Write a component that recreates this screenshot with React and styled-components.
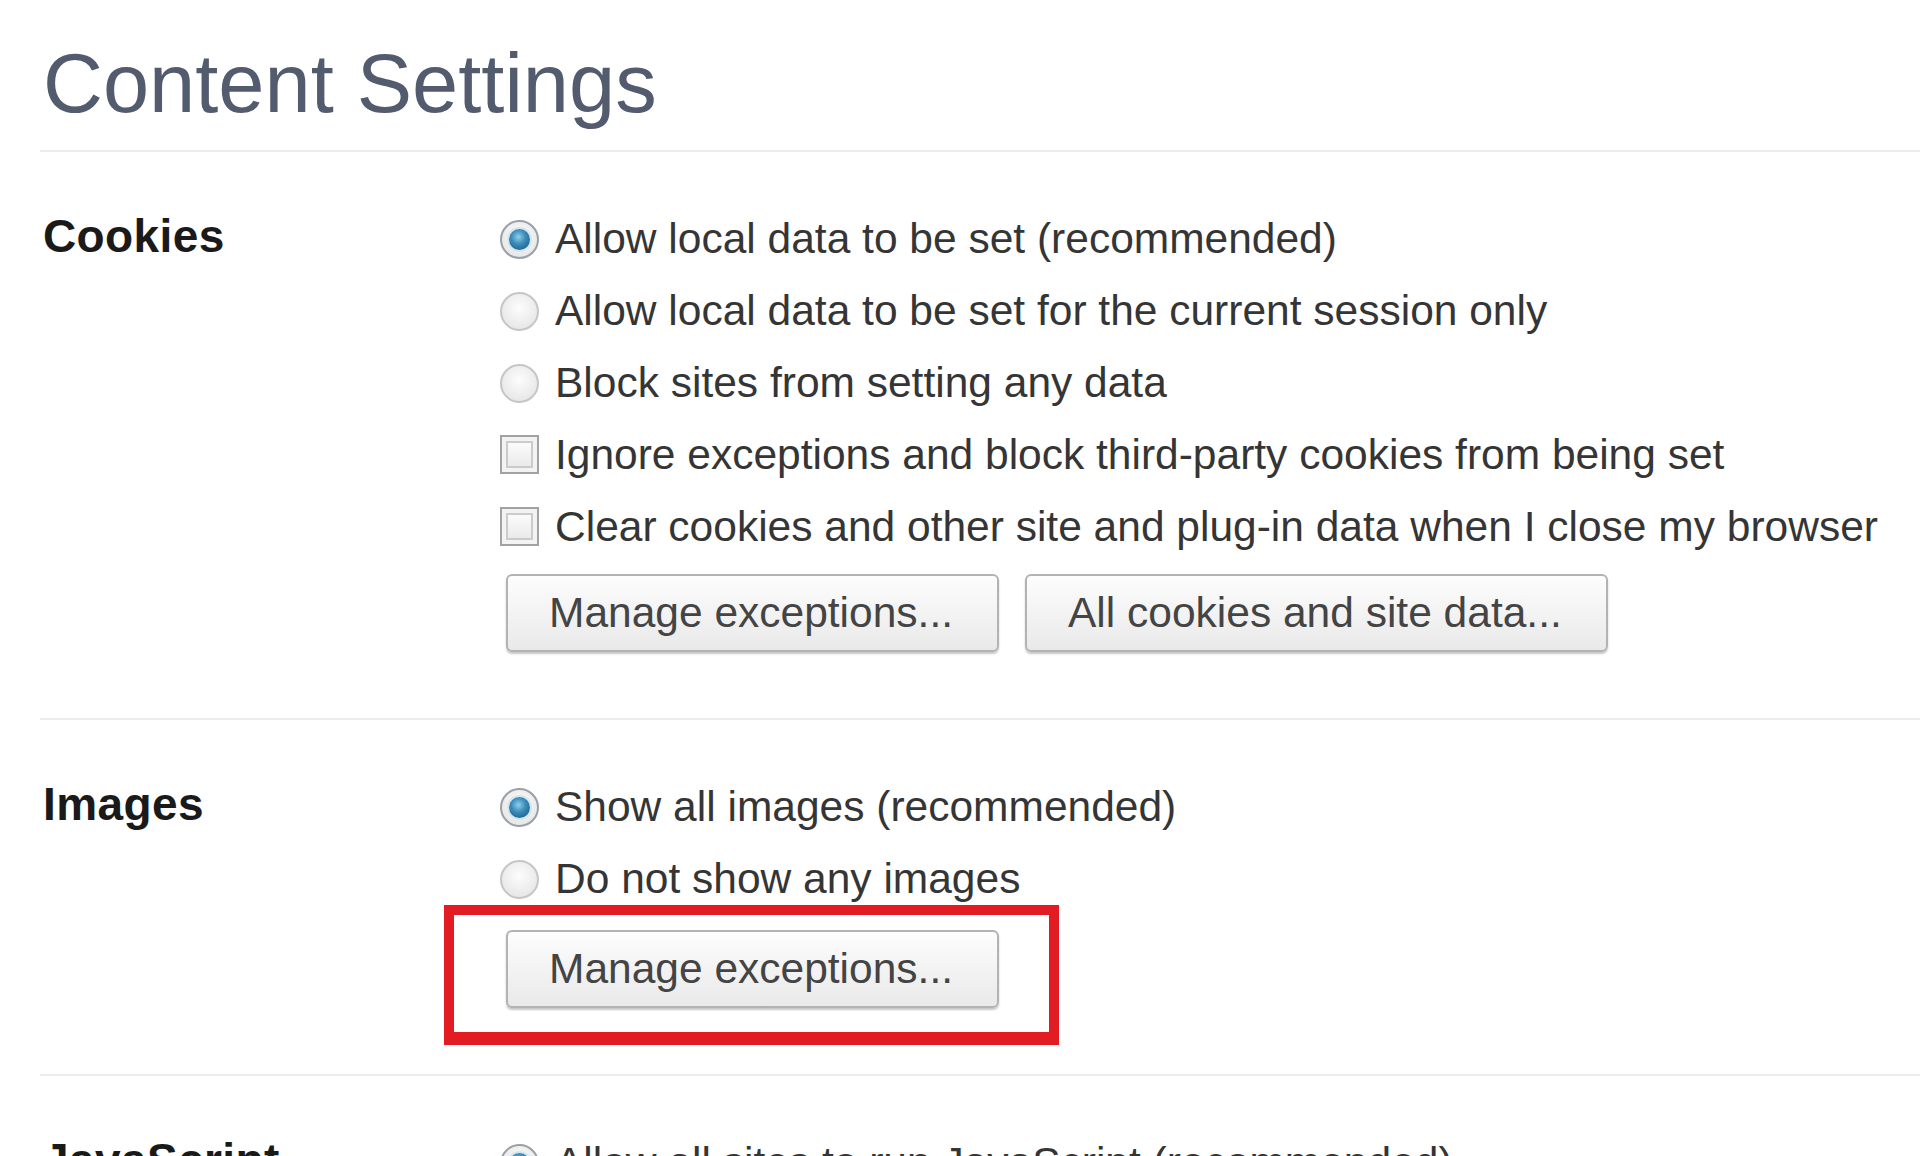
import styled, { createGlobalStyle } from "styled-components";

const GlobalStyle = createGlobalStyle`
  body {
    margin: 0;
    background: #ffffff;
    overflow: hidden;
    font-family: "Liberation Sans", Arial, sans-serif;
  }
`;

const Page = styled.div`
  padding-left: 40px;
  height: 1156px;
  overflow: hidden;
`;

const Header = styled.header`
  box-sizing: border-box;
  height: 150px;
  padding: 42px 0 0 3px;
`;

const Title = styled.h1`
  margin: 0;
  font-size: 83px;
  line-height: 84px;
  font-weight: normal;
  color: #535b6e;
`;

const Section = styled.section`
  display: grid;
  grid-template-columns: 457px 1fr;
  padding: 51px 0 66px 3px;
  border-top: 2px solid #ececec;
`;

const Label = styled.h3`
  margin: 0;
  font-size: 46px;
  line-height: 66px;
  font-weight: bold;
  letter-spacing: 0.4px;
  color: #1a1a1a;
`;

const Options = styled.div`
  display: flex;
  flex-direction: column;
`;

const Row = styled.label`
  display: flex;
  align-items: center;
  gap: 16px;
  height: 72px;
  font-size: 42.5px;
  color: #353535;
  white-space: nowrap;
`;

const Radio = styled.span`
  position: relative;
  box-sizing: border-box;
  flex: none;
  width: 39px;
  height: 39px;
  border-radius: 50%;
  border: 2px solid ${(p) => (p.checked ? "#9aa0a8" : "#c6c6c6")};
  background: radial-gradient(circle at 50% 40%, #fdfdfd, #e0e0e0);

  &::after {
    content: "";
    display: ${(p) => (p.checked ? "block" : "none")};
    position: absolute;
    left: 7px;
    top: 7px;
    width: 21px;
    height: 21px;
    border-radius: 50%;
    background: radial-gradient(circle at 45% 38%, #8fd0ec 0%, #3d8dbb 40%, #1e5f88 85%);
    box-shadow: 0 0 0 2px #d3e5ef;
  }
`;

const Checkbox = styled.span`
  box-sizing: border-box;
  flex: none;
  width: 39px;
  height: 39px;
  margin-top: -2px;
  border: 2px solid #a2a2a2;
  background: linear-gradient(#ffffff, #e6e6e6);
  box-shadow: inset 0 0 0 4px #f3f3f3, inset 0 0 0 6px #cbcbcb;
`;

const Buttons = styled.div`
  display: flex;
  gap: 26px;
  margin-top: ${(p) => p.gap || 11}px;
  padding-left: 6px;
`;

const Button = styled.button`
  box-sizing: border-box;
  height: 78px;
  padding: 0 44px 0 41px;
  font-family: inherit;
  font-size: 42.5px;
  color: #444444;
  border: 2px solid #b3b3b3;
  border-radius: 6px;
  background: linear-gradient(#fdfdfd, #e9e9e9);
  box-shadow: 0 2px 2px rgba(0, 0, 0, 0.22);
`;

const Highlight = styled.div`
  align-self: flex-start;
  margin: -25px 0 -37px -62px;
  padding: 15px 50px 24px 52px;
  border: 10px solid #e31b23;
  border-bottom-width: 13px;
`;

const sections = [
  {
    title: "Cookies",
    options: [
      { type: "radio", checked: true, text: "Allow local data to be set (recommended)" },
      { type: "radio", text: "Allow local data to be set for the current session only" },
      { type: "radio", text: "Block sites from setting any data" },
      { type: "check", text: "Ignore exceptions and block third-party cookies from being set" },
      { type: "check", text: "Clear cookies and other site and plug-in data when I close my browser" },
    ],
    buttons: ["Manage exceptions...", "All cookies and site data..."],
  },
  {
    title: "Images",
    options: [
      { type: "radio", checked: true, text: "Show all images (recommended)" },
      { type: "radio", text: "Do not show any images" },
    ],
    buttons: ["Manage exceptions..."],
    highlight: true,
  },
  {
    title: "JavaScript",
    options: [
      { type: "radio", checked: true, text: "Allow all sites to run JavaScript (recommended)" },
      { type: "radio", text: "Do not allow any site to run JavaScript" },
    ],
    buttons: ["Manage exceptions..."],
  },
];

function Option({ type, checked, text }) {
  return (
    <Row>
      {type === "radio" ? <Radio checked={checked} /> : <Checkbox />}
      {text}
    </Row>
  );
}

export default function App() {
  return (
    <Page>
      <GlobalStyle />
      <Header>
        <Title>Content Settings</Title>
      </Header>
      {sections.map((s) => (
        <Section key={s.title}>
          <Label>{s.title}</Label>
          <Options>
            {s.options.map((o) => (
              <Option key={o.text} {...o} />
            ))}
            {s.highlight ? (
              <Buttons gap={15}>
                <Highlight>
                  <Button>{s.buttons[0]}</Button>
                </Highlight>
              </Buttons>
            ) : (
              <Buttons>
                {s.buttons.map((b) => (
                  <Button key={b}>{b}</Button>
                ))}
              </Buttons>
            )}
          </Options>
        </Section>
      ))}
    </Page>
  );
}
